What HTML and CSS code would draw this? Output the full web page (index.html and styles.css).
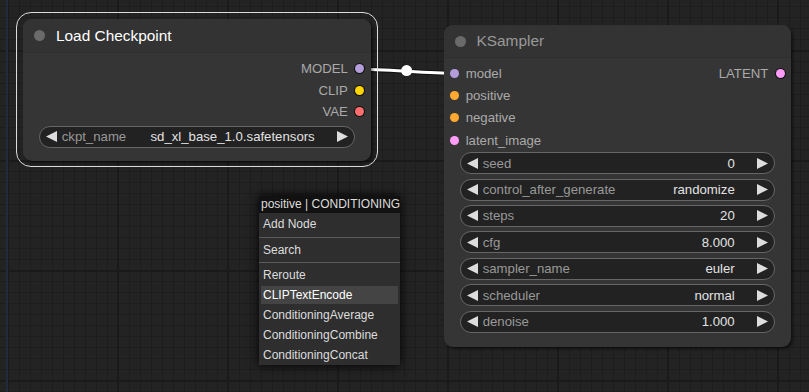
FILE: index.html
```html
<!DOCTYPE html>
<html>
<head>
<meta charset="utf-8">
<link rel="stylesheet" href="styles.css">
</head>
<body>
<div class="canvas">
  <div class="axis"></div>

  <svg class="links" width="809" height="392" viewBox="0 0 809 392">
    <path class="link-shadow" d="M359.3 69.3 C383 69.3 430 73.3 454 73.3"/>
    <path class="link" d="M359.3 69.3 C383 69.3 430 73.3 454 73.3"/>
    <circle class="link-dot" cx="406.6" cy="70.6" r="5.5"/>
  </svg>

  <div class="selection"></div>

  <div class="node node-ckpt">
    <div class="node-title selected">
      <span class="title-dot"></span>
      <span class="title-text">Load Checkpoint</span>
    </div>
    <div class="node-body ckpt-body">
      <div class="slot-row out">
        <span class="slot-label">MODEL</span><span class="dot out-dot model"></span>
      </div>
      <div class="slot-row out">
        <span class="slot-label">CLIP</span><span class="dot out-dot clip"></span>
      </div>
      <div class="slot-row out">
        <span class="slot-label">VAE</span><span class="dot out-dot vae"></span>
      </div>
      <div class="widget ckpt-widget">
        <svg class="arrow" width="11" height="11" viewBox="0 0 11 11"><polygon points="11,0 11,11 0,5.5"/></svg>
        <span class="w-label">ckpt_name</span>
        <span class="w-value">sd_xl_base_1.0.safetensors</span>
        <svg class="arrow" width="11" height="11" viewBox="0 0 11 11"><polygon points="0,0 0,11 11,5.5"/></svg>
      </div>
    </div>
  </div>

  <div class="node node-ks">
    <div class="node-title">
      <span class="title-dot"></span>
      <span class="title-text">KSampler</span>
    </div>
    <div class="node-body ks-body">
      <div class="slots">
        <div class="slot-row in">
          <span class="dot model"></span><span class="slot-label">model</span>
          <span class="spacer"></span>
          <span class="slot-label">LATENT</span><span class="dot out-dot latent"></span>
        </div>
        <div class="slot-row in">
          <span class="dot cond"></span><span class="slot-label">positive</span>
        </div>
        <div class="slot-row in">
          <span class="dot cond"></span><span class="slot-label">negative</span>
        </div>
        <div class="slot-row in">
          <span class="dot latent"></span><span class="slot-label">latent_image</span>
        </div>
      </div>
      <div class="widgets">
        <div class="widget">
          <svg class="arrow" width="11" height="11" viewBox="0 0 11 11"><polygon points="11,0 11,11 0,5.5"/></svg>
          <span class="w-label">seed</span><span class="w-value">0</span>
          <svg class="arrow" width="11" height="11" viewBox="0 0 11 11"><polygon points="0,0 0,11 11,5.5"/></svg>
        </div>
        <div class="widget">
          <svg class="arrow" width="11" height="11" viewBox="0 0 11 11"><polygon points="11,0 11,11 0,5.5"/></svg>
          <span class="w-label">control_after_generate</span><span class="w-value">randomize</span>
          <svg class="arrow" width="11" height="11" viewBox="0 0 11 11"><polygon points="0,0 0,11 11,5.5"/></svg>
        </div>
        <div class="widget">
          <svg class="arrow" width="11" height="11" viewBox="0 0 11 11"><polygon points="11,0 11,11 0,5.5"/></svg>
          <span class="w-label">steps</span><span class="w-value">20</span>
          <svg class="arrow" width="11" height="11" viewBox="0 0 11 11"><polygon points="0,0 0,11 11,5.5"/></svg>
        </div>
        <div class="widget">
          <svg class="arrow" width="11" height="11" viewBox="0 0 11 11"><polygon points="11,0 11,11 0,5.5"/></svg>
          <span class="w-label">cfg</span><span class="w-value">8.000</span>
          <svg class="arrow" width="11" height="11" viewBox="0 0 11 11"><polygon points="0,0 0,11 11,5.5"/></svg>
        </div>
        <div class="widget">
          <svg class="arrow" width="11" height="11" viewBox="0 0 11 11"><polygon points="11,0 11,11 0,5.5"/></svg>
          <span class="w-label">sampler_name</span><span class="w-value">euler</span>
          <svg class="arrow" width="11" height="11" viewBox="0 0 11 11"><polygon points="0,0 0,11 11,5.5"/></svg>
        </div>
        <div class="widget">
          <svg class="arrow" width="11" height="11" viewBox="0 0 11 11"><polygon points="11,0 11,11 0,5.5"/></svg>
          <span class="w-label">scheduler</span><span class="w-value">normal</span>
          <svg class="arrow" width="11" height="11" viewBox="0 0 11 11"><polygon points="0,0 0,11 11,5.5"/></svg>
        </div>
        <div class="widget">
          <svg class="arrow" width="11" height="11" viewBox="0 0 11 11"><polygon points="11,0 11,11 0,5.5"/></svg>
          <span class="w-label">denoise</span><span class="w-value">1.000</span>
          <svg class="arrow" width="11" height="11" viewBox="0 0 11 11"><polygon points="0,0 0,11 11,5.5"/></svg>
        </div>
      </div>
    </div>
  </div>

  <div class="menu">
    <div class="menu-title">positive | CONDITIONING</div>
    <div class="menu-items">
      <div class="entry">Add Node</div>
      <div class="sep sep-a"></div>
      <div class="entry">Search</div>
      <div class="sep sep-b"></div>
      <div class="entry">Reroute</div>
      <div class="entry hover">CLIPTextEncode</div>
      <div class="entry">ConditioningAverage</div>
      <div class="entry">ConditioningCombine</div>
      <div class="entry">ConditioningConcat</div>
    </div>
  </div>
</div>
</body>
</html>
```

FILE: styles.css
```css
* { box-sizing: border-box; }

html, body {
  margin: 0;
  padding: 0;
  width: 809px;
  height: 392px;
  overflow: hidden;
  background: #222;
}

.canvas {
  position: relative;
  width: 809px;
  height: 392px;
  overflow: hidden;
  font-family: "Liberation Sans", Arial, sans-serif;
  background-color: #232323;
  background-image:
    linear-gradient(to right, #1a1a1a 2px, transparent 2px),
    linear-gradient(to bottom, #1a1a1a 2px, transparent 2px),
    linear-gradient(to right, #1d1d1d 1px, transparent 1px),
    linear-gradient(to bottom, #1d1d1d 1px, transparent 1px);
  background-size: 110px 110px, 110px 110px, 11px 11px, 11px 11px;
  background-position: 7px 0, 0 50px, 8px 0, 0 6px;
}

.axis {
  position: absolute;
  left: 6px;
  top: 0;
  width: 2px;
  height: 392px;
  background: #222b3d;
}

.links {
  position: absolute;
  left: 0;
  top: 0;
}
.link-shadow {
  fill: none;
  stroke: rgba(0, 0, 0, 0.5);
  stroke-width: 5;
}
.link {
  fill: none;
  stroke: #fff;
  stroke-width: 3;
}
.link-dot { fill: #fff; }

.selection {
  position: absolute;
  left: 16px;
  top: 12px;
  width: 362px;
  height: 155px;
  border: 1.5px solid #dcdcdc;
  border-radius: 15px;
}

.node {
  position: absolute;
  background: #353535;
  border-radius: 9px;
  box-shadow: 2px 2px 3px rgba(0, 0, 0, 0.5);
  display: flex;
  flex-direction: column;
  overflow: hidden;
}
.node-ckpt { left: 23px; top: 19px; width: 348px; height: 142px; }
.node-ks { left: 444px; top: 25px; width: 347px; height: 322px; }

.node-title {
  height: 34px;
  flex: none;
  display: flex;
  align-items: center;
  gap: 11px;
  padding-left: 11px;
  background: #333;
  border-bottom: 1px solid #2f2f2f;
}
.node-ks .node-title { height: 33px; padding-left: 10.5px; gap: 11px; }
.title-dot {
  width: 11px;
  height: 11px;
  border-radius: 50%;
  background: #6a6a6a;
  flex: none;
}
.title-text {
  font-size: 15.4px;
  color: #999;
}
.selected .title-text { color: #fff; }

.node-body { display: flex; flex-direction: column; }
.ckpt-body { padding: 5px 0 0 0; }

.slot-row {
  display: flex;
  align-items: center;
  height: 21.5px;
}
.slot-row.out {
  justify-content: flex-end;
  padding-right: 7.2px;
  gap: 7px;
}
.slot-label {
  font-size: 13.2px;
  color: #aaa;
}
.dot {
  width: 9px;
  height: 9px;
  border-radius: 50%;
  flex: none;
}
.out-dot { box-shadow: 0 0 0 1px #111; }
.model { background: #b39ddb; }
.clip { background: #ffd500; }
.vae { background: #ff6e6e; }
.latent { background: #ff9cf9; }
.cond { background: #ffa931; }

.ks-body { padding: 4px 0 14px 0; }
.slots .slot-row.in {
  height: 22.3px;
  padding-left: 5.5px;
  padding-right: 6.5px;
  gap: 7.2px;
}
.spacer { flex: 1; }

.widgets {
  display: flex;
  flex-direction: column;
  gap: 4.4px;
  margin-top: 1px;
}

.widget {
  height: 22px;
  margin: 0 16px;
  background: #222;
  border: 1px solid #666;
  border-radius: 11px;
  display: flex;
  align-items: center;
  padding: 0 5.7px;
  font-size: 13.2px;
}
.ckpt-widget { margin-top: 3px; height: 22.7px; }
.arrow { flex: none; fill: #ddd; }
.w-label {
  color: #999;
  margin-left: 5px;
  flex: 1;
  white-space: nowrap;
}
.w-value {
  color: #e2e2e2;
  margin-right: 22.6px;
  white-space: nowrap;
}

.menu {
  position: absolute;
  left: 259px;
  top: 196px;
  width: 141px;
  background: #2e2e2e;
  box-shadow: 0 0 10px #000;
  font-family: "Liberation Sans", Tahoma, sans-serif;
  font-size: 12px;
}
.menu-title {
  height: 17px;
  line-height: 17px;
  background: #111;
  color: #ddd;
  padding-left: 2px;
  white-space: nowrap;
}
.menu-items {
  display: flex;
  flex-direction: column;
  padding-top: 1px;
}
.entry {
  height: 18px;
  line-height: 18px;
  margin: 1px 2px;
  padding-left: 2px;
  color: #ddd;
  white-space: nowrap;
}
.entry.hover {
  background: #444;
  color: #fff;
}
.sep {
  height: 1px;
  background: #5a5a5a;
}
.sep-a { margin: 3px 0 2px 0; }
.sep-b { margin: 2px 0 2px 0; }
```
